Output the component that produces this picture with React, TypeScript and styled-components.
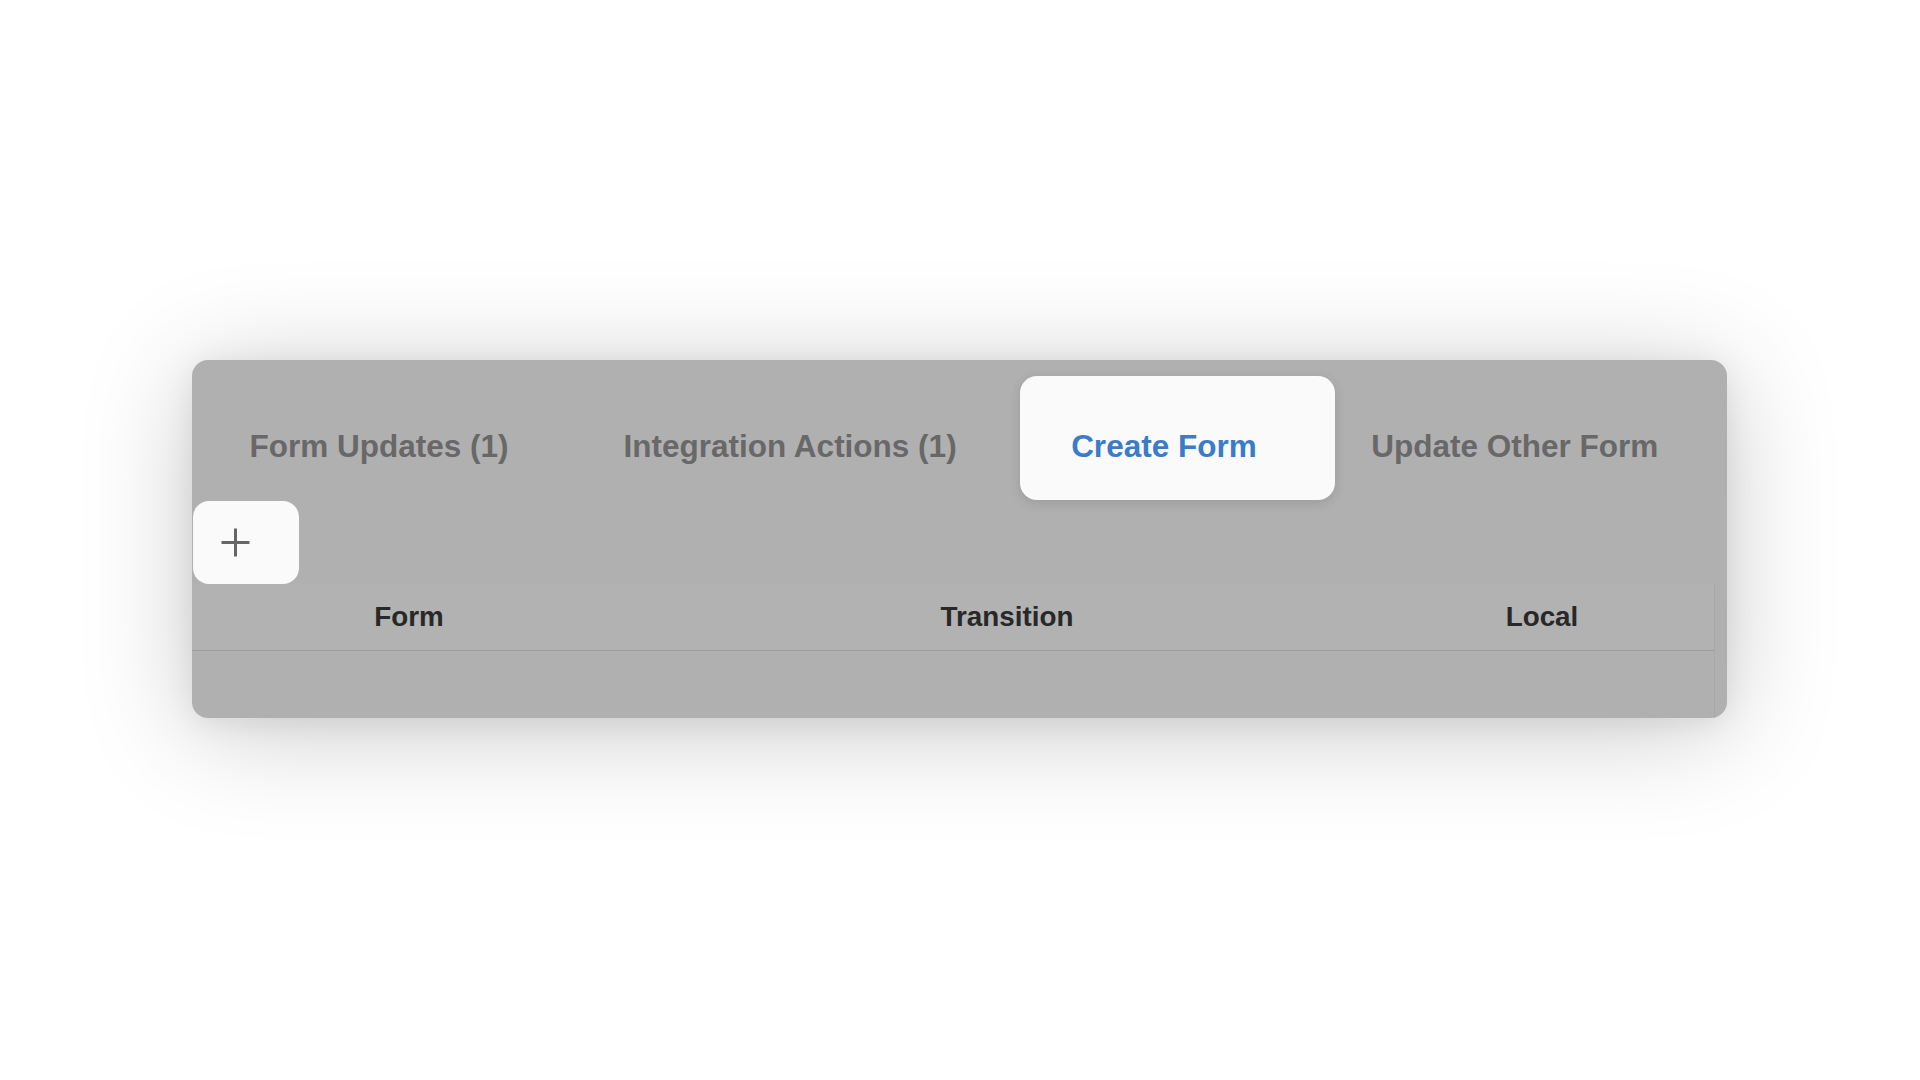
import React from "react";
import styled, { createGlobalStyle } from "styled-components";

const GlobalStyle = createGlobalStyle`
  html, body {
    margin: 0;
    padding: 0;
    background: #ffffff;
  }
  body {
    font-family: "Liberation Sans", Arial, Helvetica, sans-serif;
  }
  * { box-sizing: border-box; }
`;

const Page = styled.div`
  width: 1920px;
  height: 1080px;
  padding: 360px 0 0 192px;
  overflow: hidden;
`;

const Panel = styled.section`
  width: 1535px;
  background: #b0b0b0;
  border-radius: 16px;
  box-shadow: 0 12px 110px rgba(0, 0, 0, 0.21), 0 4px 30px rgba(0, 0, 0, 0.08);
  display: flex;
  flex-direction: column;
  overflow: hidden;
`;

const TabBar = styled.div`
  display: flex;
  align-items: stretch;
  padding-top: 16px;
`;

const Tab = styled.div<{ $active?: boolean }>`
  font-size: 31.5px;
  font-weight: 700;
  line-height: 35px;
  white-space: nowrap;
  color: ${(p) => (p.$active ? "#3a7cc9" : "#686868")};
  padding: ${(p) => (p.$active ? "53px 78px 36px 51px" : "53px 57.5px 36px")};
  margin: ${(p) => (p.$active ? "0 -21px 0 6px" : "0")};
  background: ${(p) => (p.$active ? "#fafafa" : "transparent")};
  border-radius: 17px;
  box-shadow: ${(p) => (p.$active ? "0 3px 12px rgba(0,0,0,0.12)" : "none")};
`;

const AddButton = styled.button`
  width: 106px;
  height: 83px;
  margin: 1px 0 0 1px;
  padding: 0 0 0 27px;
  border: none;
  border-radius: 16px;
  background: #fafafa;
  display: flex;
  align-items: center;
  cursor: pointer;
`;

const Table = styled.div`
  width: 1523px;
  display: flex;
  flex-direction: column;
  border-right: 1px solid #a8a8a8;
`;

const HeaderRow = styled.div`
  display: grid;
  grid-template-columns: 434px 762px 308px 1fr;
  align-items: center;
  height: 67px;
  border-bottom: 1px solid #9c9c9c;
  background: #b2b2b2;
`;

const HeaderCell = styled.div`
  text-align: center;
  font-size: 27.8px;
  font-weight: 700;
  color: #282828;
`;

const BodyArea = styled.div`
  height: 67px;
`;

const PlusIcon = () => (
  <svg width="31" height="31" viewBox="0 0 31 31" fill="none">
    <path d="M15.5 1.5V29.5M1.5 15.5H29.5" stroke="#666666" strokeWidth="3" />
  </svg>
);

const tabs = [
  { label: "Form Updates (1)", active: false },
  { label: "Integration Actions (1)", active: false },
  { label: "Create Form", active: true },
  { label: "Update Other Form", active: false },
];

export default function App() {
  return (
    <>
      <GlobalStyle />
      <Page>
        <Panel>
          <TabBar>
            {tabs.map((t) => (
              <Tab key={t.label} $active={t.active}>
                {t.label}
              </Tab>
            ))}
          </TabBar>
          <AddButton aria-label="Add">
            <PlusIcon />
          </AddButton>
          <Table>
            <HeaderRow>
              <HeaderCell>Form</HeaderCell>
              <HeaderCell>Transition</HeaderCell>
              <HeaderCell>Local</HeaderCell>
            </HeaderRow>
            <BodyArea />
          </Table>
        </Panel>
      </Page>
    </>
  );
}
